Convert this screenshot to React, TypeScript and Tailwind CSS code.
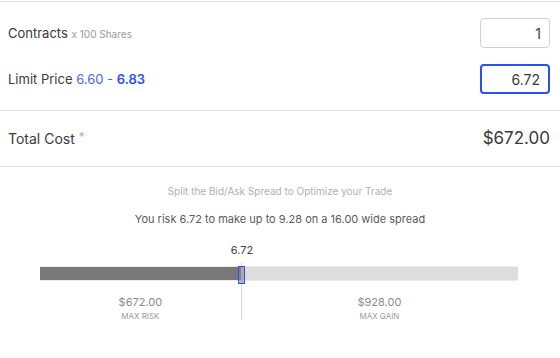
import { useState } from "react";

const font = { fontFamily: "Inter, 'Liberation Sans', sans-serif" };

export default function App() {
  const [contracts] = useState("1");
  const [limit] = useState("6.72");
  const riskPct = 42;

  return (
    <div className="w-[560px] h-[358px] bg-white text-[#3a3a3a] pt-px antialiased" style={font}>
      <div className="border-t border-[#e3e3e3]">
        <div className="pl-2 pr-[10px] pt-4 pb-4 flex flex-col gap-4">
          <div className="flex items-center justify-between h-[30px]">
            <div className="text-[13px] leading-none">
              Contracts <span className="text-[10px] text-[#999]">x 100 Shares</span>
            </div>
            <input
              readOnly
              value={contracts}
              className="w-[70px] h-[30px] rounded border border-[#d0d0d0] text-right px-2 text-[14px] text-[#3a3a3a] outline-none"
              style={font}
            />
          </div>
          <div className="flex items-center justify-between h-[30px]">
            <div className="text-[13px] leading-none">
              Limit Price <span className="text-[#4466f2]">6.60 - </span>
              <span className="text-[#2a4ff5] font-semibold">6.83</span>
            </div>
            <input
              readOnly
              value={limit}
              className="w-[70px] h-[30px] rounded border-2 border-[#2a4ff5] text-right px-2 text-[14px] text-[#3a3a3a] outline-none"
              style={font}
            />
          </div>
        </div>
        <div className="border-t border-[#e3e3e3] h-[56px] pl-2 pr-[10px] flex items-center justify-between">
          <div className="text-[14px]">
            Total Cost <span className="text-[#b0b0b0] align-top text-[12px]">*</span>
          </div>
          <div className="text-[17px]">$672.00</div>
        </div>
        <div className="border-t border-[#e3e3e3] flex flex-col items-center">
          <div className="mt-[17px] text-[10px] text-[#b0b0b0]">Split the Bid/Ask Spread to Optimize your Trade</div>
          <div className="mt-[12px] text-[11px] text-[#5a5a5a]">You risk 6.72 to make up to 9.28 on a 16.00 wide spread</div>
        </div>
        <div className="pl-10 pr-[42px] mt-[14px]">
          <div className="relative">
            <div className="flex" style={{ paddingLeft: `calc(${riskPct}% - 10px)` }}>
              <span className="w-[20px] text-center text-[11px] text-[#444]">6.72</span>
            </div>
            <div className="mt-[8px] flex h-[15px] border-y border-[#ececec]">
              <div className="bg-[#787878]" style={{ width: `${riskPct}%` }} />
              <div className="flex-1 bg-[#dddddd]" />
            </div>
            <div
              className="absolute top-[20px] w-px h-[58px] bg-[#d8d8d8]"
              style={{ left: `${riskPct}%` }}
            />
            <div
              className="absolute top-[24px] w-[7px] h-[18px] border border-[#2a4ff5] bg-[#888]/60 -translate-x-[3px]"
              style={{ left: `${riskPct}%` }}
            />
            <div className="flex mt-[14px]">
              <div className="flex flex-col items-center" style={{ width: `${riskPct}%` }}>
                <span className="text-[11px] text-[#8a8a8a] leading-[14px]">$672.00</span>
                <span className="text-[8px] text-[#9a9a9a] leading-[14px]">MAX RISK</span>
              </div>
              <div className="flex-1 flex flex-col items-center">
                <span className="text-[11px] text-[#8a8a8a] leading-[14px]">$928.00</span>
                <span className="text-[8px] text-[#9a9a9a] leading-[14px]">MAX GAIN</span>
              </div>
            </div>
          </div>
        </div>
      </div>
    </div>
  );
}
